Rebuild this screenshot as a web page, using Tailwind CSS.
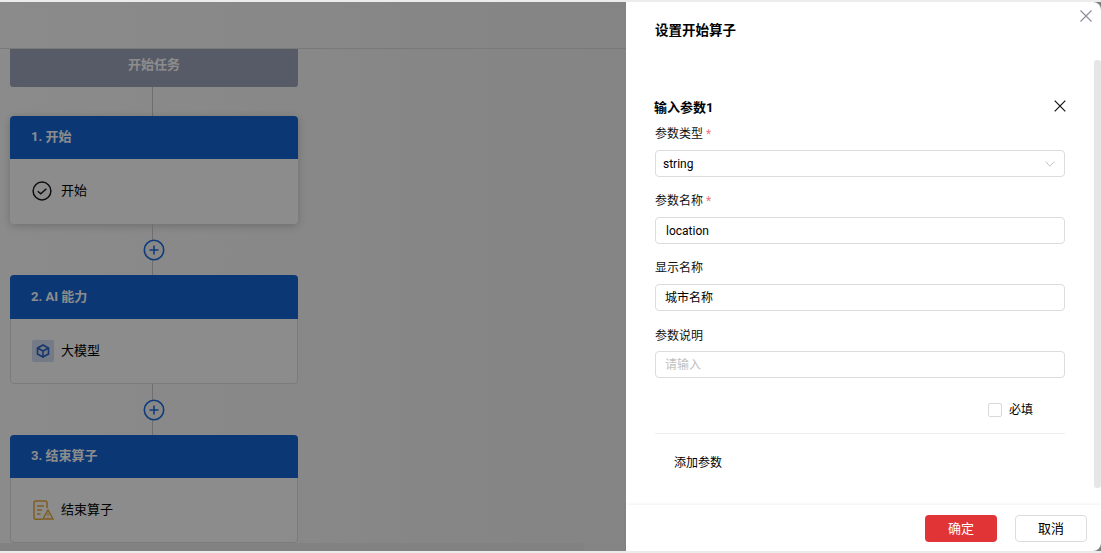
<!DOCTYPE html>
<html lang="zh">
<head>
<meta charset="utf-8">
<script src="https://cdn.jsdelivr.net/npm/@tailwindcss/browser@4"></script>
</head>
<body class="m-0 bg-white">
<div class="relative h-[553px] w-[1101px] overflow-hidden bg-[#ececec] font-['Roboto','Noto_Sans_CJK_SC',sans-serif] text-[13px] text-black">
  <div class="absolute left-0 right-0 top-[2px] h-[549px] overflow-hidden bg-gradient-to-r from-[#fdfdfd] to-[#e8e8e8]">
    <div class="h-[47px] border-b border-[#dcdcdc]"></div>
    <div class="ml-[10px] flex w-[288px] flex-col items-center">
      <div class="flex h-[38px] w-full items-center justify-center rounded-b-[3px] bg-[#9fa4bc] pb-[6px] text-[13px] font-bold text-white">开始任务</div>
      <div class="mr-[4px] h-[29px] w-px bg-[#c8c8c8]"></div>
      <div class="w-full rounded-[4px] bg-white shadow-[0_2px_8px_rgba(0,0,0,0.2)]">
        <div class="flex h-[43px] items-center rounded-t-[4px] bg-[#1466d6] pb-[1px] pl-[21px] text-[13px] font-bold text-white">1. 开始</div>
        <div class="flex h-[65px] items-center gap-[9px] pb-[1px] pl-[22px]">
          <svg class="h-5 w-5" viewBox="0 0 20 20" fill="none" stroke="#1a1a1a" stroke-width="1.5"><circle cx="10" cy="10" r="8.9"/><path d="M5.8 10.2l3 2.6 5.6-5"/></svg>
          <span>开始</span>
        </div>
      </div>
      <div class="relative mr-[4px] flex h-[51px] w-px items-center justify-center bg-[#c8c8c8]">
        <svg class="absolute h-[22px] w-[22px] max-w-none translate-x-[2px]" viewBox="0 0 22 22" fill="#f7f7f7" stroke="#1f6ee0" stroke-width="1.6"><circle cx="11" cy="11" r="9.7"/><path d="M6.5 11h9M11 6.5v9"/></svg>
      </div>
      <div class="w-full rounded-[4px] border border-[#e0e0e0] bg-white">
        <div class="-m-px flex h-[44px] items-center rounded-t-[4px] bg-[#1466d6] pl-[21px] text-[13px] font-bold text-white">2. AI 能力</div>
        <div class="flex h-[65px] items-center gap-[7px] pl-[21px] pt-[1px]">
          <div class="flex h-[22px] w-[22px] items-center justify-center rounded-[2px] bg-[#d3dff5]">
            <svg class="h-[14px] w-[14px]" viewBox="0 0 14 14" fill="none" stroke="#2f62c4" stroke-width="1.6"><path d="M7 1l5.5 3v6L7 13 1.5 10V4z"/><path d="M1.8 4.2L7 7l5.2-2.8M7 7v5.6"/></svg>
          </div>
          <span>大模型</span>
        </div>
      </div>
      <div class="relative mr-[4px] flex h-[51px] w-px items-center justify-center bg-[#c8c8c8]">
        <svg class="absolute h-[22px] w-[22px] max-w-none translate-x-[2px]" viewBox="0 0 22 22" fill="#f7f7f7" stroke="#1f6ee0" stroke-width="1.6"><circle cx="11" cy="11" r="9.7"/><path d="M6.5 11h9M11 6.5v9"/></svg>
      </div>
      <div class="w-full rounded-[4px] border border-[#e0e0e0] bg-white">
        <div class="-m-px flex h-[43px] items-center rounded-t-[4px] bg-[#1466d6] pb-[1px] pl-[21px] text-[13px] font-bold text-white">3. 结束算子</div>
        <div class="flex h-[65px] items-center gap-[7px] pl-[22px] pt-[1px]">
          <svg class="h-[22px] w-[21px]" viewBox="0 0 21 22" fill="none" stroke="#e8a93c" stroke-width="1.5"><path d="M9 20.2H2.5A1.5 1.5 0 0 1 1 18.7V3.5A1.5 1.5 0 0 1 2.5 2h10A1.5 1.5 0 0 1 14 3.5V9"/><path d="M4 7h7M4 11h5M4 15h3.5"/><path d="M15 11l5 9H10z"/><path d="M15 14v3M15 18v.8" stroke-width="1"/></svg>
          <span>结束算子</span>
        </div>
      </div>
    </div>
    <div class="absolute bottom-0 left-0 h-[8px] w-[585px] rounded-r-[4px] bg-[#ededed]"></div>
  </div>
  <div class="absolute inset-x-0 top-[2px] h-[549px] bg-black/45"></div>

  <aside class="absolute bottom-[2px] left-[626px] right-0 top-[2px] flex flex-col rounded-r-[8px] bg-white">
    <button class="absolute right-[8px] top-[7px] text-[#8a8f99]">
      <svg class="h-[14px] w-[14px]" viewBox="0 0 14 14" fill="none" stroke="currentColor" stroke-width="1.2"><path d="M1.5 1.5l11 11M12.5 1.5l-11 11"/></svg>
    </button>
    <div class="pl-[29px] pt-[19px] text-[13.5px] font-bold leading-[18px]">设置开始算子</div>
    <div class="relative min-h-0 flex-1">
      <div class="absolute bottom-[17px] right-0 top-[21px] w-[7px] rounded-[3px] bg-[#e6e6e6]"></div>
      <div class="ml-[29px] mr-[36px] pt-[59px]">
        <div class="flex h-[20px] items-center justify-between">
          <span class="-ml-px pb-[1px] text-[13px] font-bold">输入参数1</span>
          <svg class="-mt-[5px] h-[12px] w-[12px] translate-x-px" viewBox="0 0 12 12" fill="none" stroke="#111" stroke-width="1.2"><path d="M.7.7l10.6 10.6M11.3.7L.7 11.3"/></svg>
        </div>
        <label class="mt-[8px] block h-[18px] text-[12px] leading-[16px] text-[#111]">参数类型 <span class="text-[#f2777f]">*</span></label>
        <div class="mt-[6px] flex h-[27px] items-center justify-between rounded-[4px] border border-[#dcdcdc] pl-[7px] pr-[9px] text-[12px]">
          <span>string</span>
          <svg class="h-[8px] w-[10px]" viewBox="0 0 10 8" fill="none" stroke="#c4c4c4"><path d="M.7 1.5L5 6.3l4.3-4.8"/></svg>
        </div>
        <label class="mt-[16px] block h-[18px] text-[12px] leading-[16px] text-[#111]">参数名称 <span class="text-[#f2777f]">*</span></label>
        <div class="mt-[6px] flex h-[27px] items-center rounded-[4px] border border-[#dcdcdc] px-[10px] text-[12px]">location</div>
        <label class="mt-[16px] block h-[18px] text-[12px] leading-[16px] text-[#111]">显示名称</label>
        <div class="mt-[6px] flex h-[27px] items-center rounded-[4px] border border-[#dcdcdc] px-[9px] text-[12px]">城市名称</div>
        <label class="mt-[16px] block h-[18px] text-[12px] leading-[18px] text-[#111]">参数说明</label>
        <div class="mt-[6px] flex h-[27px] items-center rounded-[4px] border border-[#dcdcdc] px-[9px] pt-[1px] text-[12px] text-[#bfbfbf]">请输入</div>
        <div class="mt-[24px] flex h-[16px] items-center pl-[333px]">
          <span class="h-[14px] w-[14px] rounded-[2px] border border-[#d9d9d9]"></span>
          <span class="ml-[7px] text-[12px]">必填</span>
        </div>
        <div class="mt-[15px] border-t border-[#eeeeee]"></div>
        <div class="mt-[20px] pl-[19px] text-[12px] leading-[18px]">添加参数</div>
      </div>
    </div>
    <footer class="flex h-[46px] items-center justify-end gap-[18px] pr-[14px] pt-[1px] shadow-[0_-1px_3px_rgba(0,0,0,0.06)]">
      <button class="flex h-[27px] w-[72px] items-center justify-center rounded-[4px] bg-[#e03436] text-[13px] text-white">确定</button>
      <button class="flex h-[27px] w-[72px] items-center justify-center rounded-[4px] border border-[#dcdcdc] text-[13px]">取消</button>
    </footer>
  </aside>
</div>
</body>
</html>
